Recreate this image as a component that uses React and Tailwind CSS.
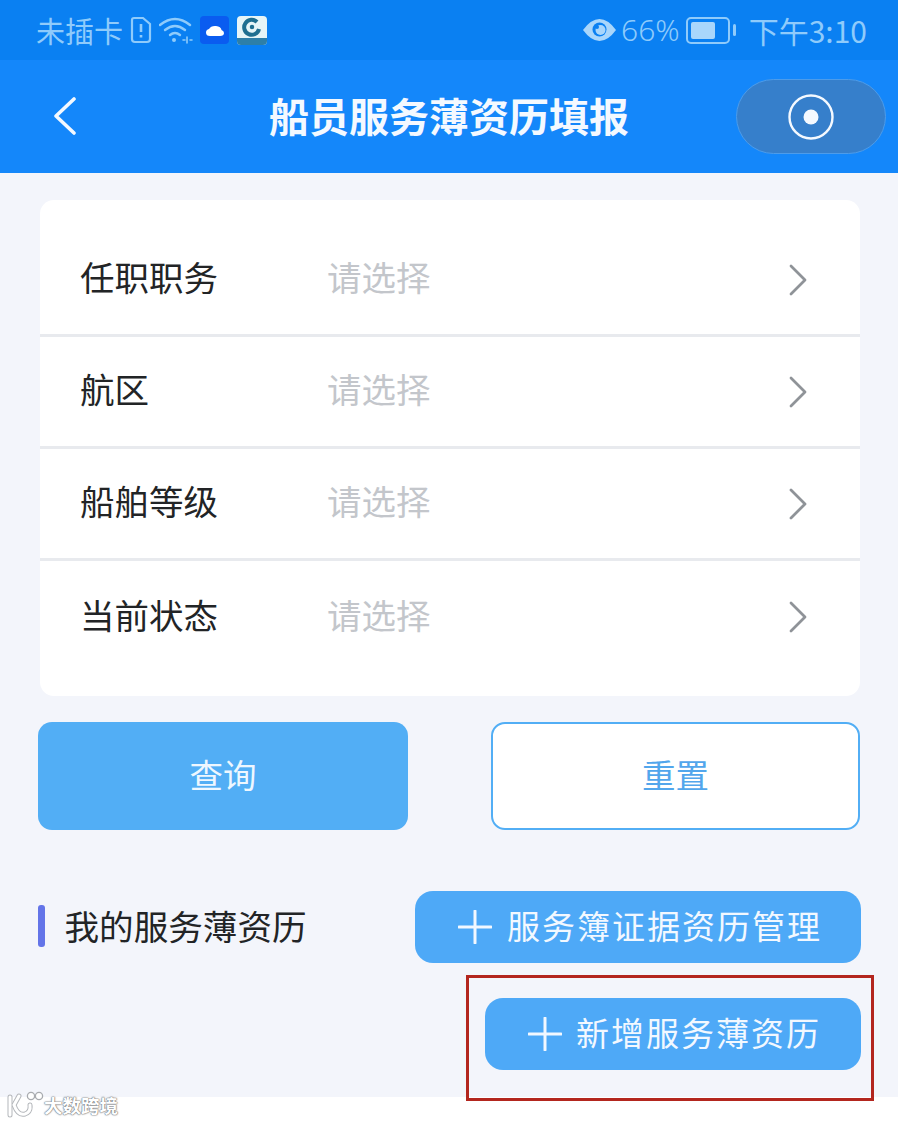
import React from "react";

const cjk = { fontFamily: '"Noto Sans CJK SC", "Noto Sans", sans-serif' };

function Chevron() {
  return (
    <svg width="20" height="32" viewBox="0 0 20 32" fill="none" stroke="#8f9398" strokeWidth="2.8" strokeLinecap="round" strokeLinejoin="round">
      <path d="M3 2 L17 16 L3 30" />
    </svg>
  );
}

function Plus() {
  return (
    <svg width="34" height="34" viewBox="0 0 34 34" stroke="#f2f8ff" strokeWidth="3" strokeLinecap="round">
      <path d="M1 17 H33 M17 1 V33" />
    </svg>
  );
}

function Row({ label, last }) {
  return (
    <div className={`flex h-[112px] items-center pl-[40px] pr-[52px] ${last ? "" : "border-b-[3px] border-[#e8eaee]"}`}>
      <span className="mb-[5px] w-[247px] text-[34.5px] text-[#222426]">{label}</span>
      <span className="mb-[5px] flex-1 text-[34.5px] text-[#c3c6cb]">请选择</span>
      <Chevron />
    </div>
  );
}

const logoPaths = (
  <>
    <path d="M4 6 V24" />
    <path d="M13 5 L8 14 Q12 25 19 23 Q25 21 24 14" />
  </>
);

export default function App() {
  return (
    <div className="relative h-[1122px] w-[900px] overflow-hidden bg-white" style={cjk}>
      <div className="relative h-[1097px] w-[898px] bg-[#f3f5fb]">
        {/* status bar */}
        <div className="flex h-[60px] items-center bg-[#0a80f2] pl-[36px] pr-[31px] text-[#8fcbfb]">
          <span className="text-[29px] leading-none">未插卡</span>
          <svg className="ml-[7px]" width="22" height="28" viewBox="0 0 22 28" fill="none" stroke="#8fcbfb" strokeWidth="2.2">
            <path d="M4 2 H13 L20 8 V23 Q20 26 17 26 H5 Q2 26 2 23 V4 Q2 2 4 2 Z" />
            <path d="M11 8 V16 M11 19 V21.5" strokeWidth="2.6" />
          </svg>
          <svg className="ml-[7px]" width="34" height="28" viewBox="0 0 34 28" fill="none" stroke="#8fcbfb" strokeWidth="2.4" strokeLinecap="round">
            <path d="M1 9 Q16 -3 31 9" />
            <path d="M6 14 Q16 6 26 14" />
            <path d="M11 19 Q16 15 21 19" />
            <circle cx="15" cy="24" r="2" fill="#8fcbfb" stroke="none" />
            <path d="M24 24 H26 M28 21 V27 M31 24 H33" strokeWidth="1.6" />
          </svg>
          <div className="ml-[7px] flex h-[28px] w-[29px] items-center justify-center rounded-[4px] bg-[#0a5cf0]">
            <svg width="20" height="16" viewBox="0 0 20 16" fill="#ffffff">
              <path d="M5 14 Q1 14 1 10.5 Q1 7.5 4 7 Q6 3.5 11 4 Q16 4.5 16.5 8 Q19 9 19 11 Q19 14 15 14 Z" />
            </svg>
          </div>
          <div className="ml-[8px] flex h-[29px] w-[30px] flex-col items-center overflow-hidden rounded-[4px] bg-[#e6f5f7]">
            <svg className="mt-[1px]" width="20" height="20" viewBox="0 0 20 20" fill="none" stroke="#1f6f90" strokeWidth="4">
              <path d="M15 5 A7.5 7.5 0 1 0 17 12" />
              <circle cx="10" cy="10" r="1.5" fill="#1f6f90" strokeWidth="1.5" />
            </svg>
            <div className="mt-auto h-[7px] w-full bg-[#2d7fa8]" />
          </div>
          <div className="flex-1" />
          <svg width="35" height="24" viewBox="0 0 35 24">
            <path d="M1 12 Q9 1 17.5 1 Q26 1 34 12 Q26 23 17.5 23 Q9 23 1 12 Z" fill="#a9d6fb" />
            <circle cx="17.5" cy="11.5" r="7" fill="#0a80f2" />
            <circle cx="18.5" cy="12" r="5" fill="#a9d6fb" />
            <circle cx="15" cy="9" r="2" fill="#0a80f2" />
          </svg>
          <span className="ml-[4px] text-[30px] leading-none" style={{ fontFamily: '"Noto Sans", sans-serif', fontWeight: 300 }}>66%</span>
          <div className="ml-[6px] flex h-[27px] w-[44px] items-center rounded-[5px] border-[2px] border-[#8fcbfb] p-[3px]">
            <div className="h-full w-[72%] rounded-[2px] bg-[#a9d6fb]" />
          </div>
          <div className="ml-[3px] h-[12px] w-[3px] rounded-full bg-[#8fcbfb]" />
          <span className="ml-[13px] text-[30px] leading-none">下午3:10</span>
        </div>

        {/* header */}
        <div className="relative flex h-[113px] items-center justify-center bg-[#1487fa]">
          <svg className="absolute left-[53px] top-[37px]" width="24" height="38" viewBox="0 0 24 38" fill="none" stroke="#f4f9ff" strokeWidth="3.6" strokeLinecap="round" strokeLinejoin="round">
            <path d="M21 2 L3 19 L21 36" />
          </svg>
          <h1 className="mb-[4px] text-[40px] font-bold leading-none text-[#f4f9ff]">船员服务薄资历填报</h1>
          <div className="absolute left-[736px] top-[19px] flex h-[75px] w-[150px] items-center justify-center rounded-full border border-[#4d9cea] bg-[#367fcb]">
            <svg width="46" height="46" viewBox="0 0 46 46">
              <circle cx="23" cy="23" r="21.5" fill="none" stroke="#f4f9ff" strokeWidth="2.4" />
              <circle cx="23" cy="23" r="7.5" fill="#f4f9ff" />
            </svg>
          </div>
        </div>

        {/* form card */}
        <div className="ml-[40px] mt-[27px] h-[496px] w-[820px] rounded-[14px] bg-white pt-[25px]">
          <Row label="任职职务" />
          <Row label="航区" />
          <Row label="船舶等级" />
          <Row label="当前状态" last />
        </div>

        {/* actions */}
        <div className="ml-[38px] mt-[26px] flex w-[822px] justify-between">
          <button className="h-[108px] w-[370px] rounded-[14px] bg-[#52aef5] pb-[4px] text-[33.5px] text-[#eef7ff]">查询</button>
          <button className="h-[108px] w-[369px] rounded-[14px] border-[2px] border-[#52aef5] bg-white pb-[4px] text-[33.5px] text-[#52a6ec]">重置</button>
        </div>

        {/* list heading */}
        <div className="ml-[38px] mt-[61px] flex w-[823px] items-start justify-between">
          <div className="mt-[13px] flex items-center">
            <div className="h-[42px] w-[7px] rounded-[3px] bg-[#6374e8]" />
            <span className="mb-[2px] ml-[19.5px] text-[34.6px] leading-[42px] text-[#222426]">我的服务薄资历</span>
          </div>
          <div className="flex flex-col items-end gap-[35px]">
            <button className="flex h-[72px] w-[446px] items-center rounded-[18px] bg-[#4ea9f7] pl-[43px]">
              <Plus />
              <span className="mb-[2px] ml-[15px] text-[33px] tracking-[2px] text-[#f2f8ff]">服务簿证据资历管理</span>
            </button>
            <button className="flex h-[72px] w-[376px] items-center rounded-[18px] bg-[#4ea9f7] pl-[43px]">
              <Plus />
              <span className="mb-[2px] ml-[14px] text-[33px] tracking-[2px] text-[#f2f8ff]">新增服务薄资历</span>
            </button>
          </div>
        </div>
      </div>

      {/* annotation box */}
      <div className="absolute left-[466px] top-[975px] h-[126px] w-[408px] border-[3px] border-[#b3261e]" />

      {/* watermark */}
      <div className="absolute left-[6px] top-[1091px] flex items-center">
        <svg width="38" height="28" viewBox="0 0 38 28" fill="none" strokeLinecap="round">
          <g stroke="#b4b7bb" strokeWidth="5">{logoPaths}</g>
          <g stroke="#ffffff" strokeWidth="3">{logoPaths}</g>
          <g stroke="#a8abaf" strokeWidth="1.3" fill="#ffffff">
            <circle cx="25" cy="5" r="3.6" />
            <circle cx="33" cy="5" r="3.6" />
          </g>
        </svg>
        <span className="text-[18.5px] font-bold leading-none text-white" style={{ textShadow: "0 0 2px #74777b, 0 0 1px #74777b, 0 0 1px #74777b" }}>大数跨境</span>
      </div>
    </div>
  );
}
